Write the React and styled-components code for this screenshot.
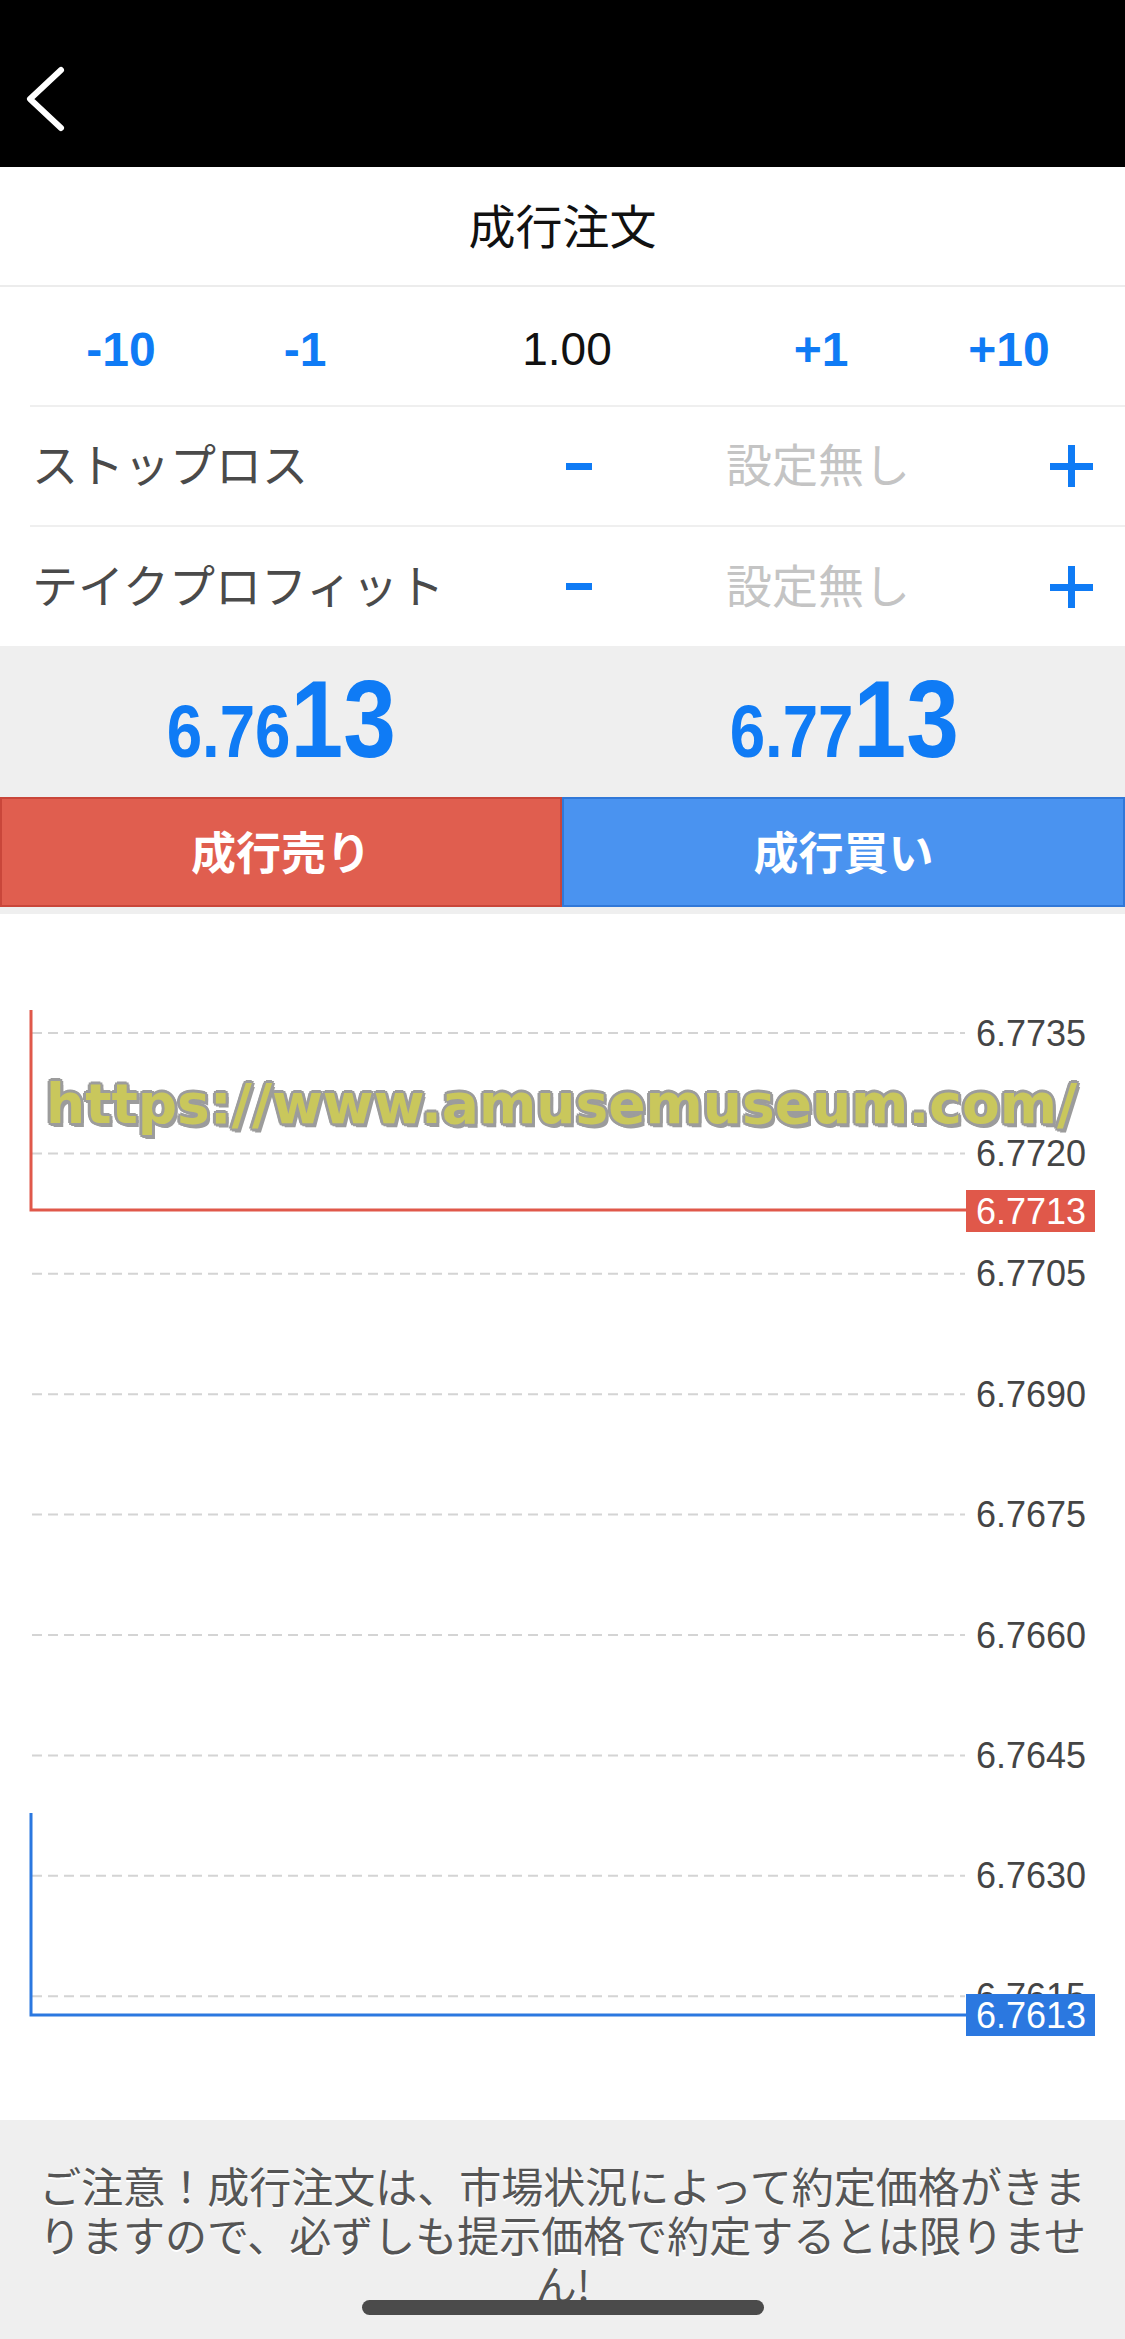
import styled, { createGlobalStyle } from "styled-components";

const GlobalStyle = createGlobalStyle`
  body {
    margin: 0;
    background: #ffffff;
    font-family: "Liberation Sans", "Noto Sans CJK JP", sans-serif;
  }
`;

const BLUE = "#0f7bf5";

const steps = [
  { label: "-10", value: false },
  { label: "-1", value: false },
  { label: "1.00", value: true },
  { label: "+1", value: false },
  { label: "+10", value: false },
];

const gridLabels = [
  "6.7735",
  "6.7720",
  "6.7705",
  "6.7690",
  "6.7675",
  "6.7660",
  "6.7645",
  "6.7630",
  "6.7615",
];

const App = () => {
  return (
    <>
      <GlobalStyle />
      <Page>
        <Header>
          <BackIcon viewBox="0 0 44 68" width="44" height="68">
            <polyline
              points="37,5 6,34 37,63"
              fill="none"
              stroke="#fff"
              strokeWidth="6"
              strokeLinecap="round"
              strokeLinejoin="round"
            />
          </BackIcon>
        </Header>

        <TitleBar>成行注文</TitleBar>

        <Row $cols="182px 186px 338px 170px 206px">
          {steps.map((s) => (
            <StepCell key={s.label} $value={s.value}>
              {s.label}
            </StepCell>
          ))}
        </Row>

        <Row $cols="509px 80px 398px 1fr">
          <Label>ストップロス</Label>
          <Minus />
          <Placeholder>設定無し</Placeholder>
          <Plus />
        </Row>

        <Row $cols="509px 80px 398px 1fr" $last>
          <Label>テイクプロフィット</Label>
          <Minus />
          <Placeholder>設定無し</Placeholder>
          <Plus />
        </Row>

        <PriceBand>
          <PriceCell>
            <Price>
              <PriceSmall>6.76</PriceSmall>
              <PriceBig>13</PriceBig>
            </Price>
          </PriceCell>
          <PriceCell>
            <Price>
              <PriceSmall>6.77</PriceSmall>
              <PriceBig>13</PriceBig>
            </Price>
          </PriceCell>
        </PriceBand>

        <ButtonRow>
          <OrderButton $kind="sell">成行売り</OrderButton>
          <OrderButton $kind="buy">成行買い</OrderButton>
        </ButtonRow>

        <Chart>
          <svg width="1125" height="1206" viewBox="0 0 1125 1206">
            {gridLabels.map((label, i) => {
              const y = 119 + i * 120.4;
              return (
                <g key={label}>
                  <line
                    x1="32"
                    x2="965"
                    y1={y}
                    y2={y}
                    stroke="#d4d4d4"
                    strokeWidth="2"
                    strokeDasharray="10 6"
                  />
                  <text
                    x="976"
                    y={y}
                    dominantBaseline="central"
                    fontFamily="Liberation Sans, sans-serif"
                    fontSize="36"
                    fill="#454545"
                  >
                    {label}
                  </text>
                </g>
              );
            })}

            {/* sell price */}
            <polyline
              points="31,96 31,296 966,296"
              fill="none"
              stroke="#e0584a"
              strokeWidth="3"
            />
            <rect x="966" y="276" width="129" height="42" fill="#e0584a" />
            <text
              x="976"
              y="297"
              dominantBaseline="central"
              fontFamily="Liberation Sans, sans-serif"
              fontSize="36"
              fill="#fff"
            >
              6.7713
            </text>

            {/* buy price */}
            <polyline
              points="31,899 31,1101 966,1101"
              fill="none"
              stroke="#2b78e0"
              strokeWidth="3"
            />
            <rect x="966" y="1080" width="129" height="42" fill="#2b78e0" />
            <text
              x="976"
              y="1101"
              dominantBaseline="central"
              fontFamily="Liberation Sans, sans-serif"
              fontSize="36"
              fill="#fff"
            >
              6.7613
            </text>
          </svg>
          <Watermark>https://www.amusemuseum.com/</Watermark>
        </Chart>

        <Footer>
          <Notice>
            ご注意！成行注文は、市場状況によって約定価格がきまりますので、必ずしも提示価格で約定するとは限りません!
          </Notice>
          <HomeBar />
        </Footer>
      </Page>
    </>
  );
};

const Page = styled.div`
  width: 1125px;
  min-height: 2339px;
  display: flex;
  flex-direction: column;
  background: #fff;
  overflow: hidden;
`;

const Header = styled.div`
  height: 167px;
  background: #000;
  box-sizing: border-box;
  padding: 65px 0 0 24px;
`;

const BackIcon = styled.svg`
  display: block;
`;

const TitleBar = styled.div`
  height: 112px;
  padding-bottom: 6px;
  border-bottom: 2px solid #ececec;
  display: flex;
  align-items: center;
  justify-content: center;
  font-family: "Noto Sans CJK JP", sans-serif;
  font-size: 47px;
  color: #111;
`;

const Row = styled.div`
  margin-left: 30px;
  height: ${(p) => (p.$last ? "119px" : "118px")};
  border-bottom: ${(p) => (p.$last ? "none" : "2px solid #efefef")};
  display: grid;
  grid-template-columns: ${(p) => p.$cols};
  align-items: center;
`;

const StepCell = styled.div`
  text-align: center;
  padding-top: 6px;
  font-size: ${(p) => (p.$value ? "46px" : "48px")};
  font-weight: ${(p) => (p.$value ? 400 : 700)};
  color: ${(p) => (p.$value ? "#111" : BLUE)};
`;

const Label = styled.div`
  padding: 0 0 8px 2px;
  font-family: "Noto Sans CJK JP", sans-serif;
  font-size: 46px;
  color: #4a4a4a;
  white-space: nowrap;
`;

const Placeholder = styled.div`
  text-align: center;
  padding-bottom: 8px;
  font-family: "Noto Sans CJK JP", sans-serif;
  font-size: 46px;
  color: #c4c4c4;
`;

const Minus = styled.div`
  justify-self: center;
  width: 26px;
  height: 7px;
  background: ${BLUE};
`;

const Plus = styled.div`
  justify-self: center;
  position: relative;
  width: 43px;
  height: 42px;

  &::before,
  &::after {
    content: "";
    position: absolute;
    background: ${BLUE};
  }
  &::before {
    left: 0;
    right: 0;
    top: 18px;
    height: 7px;
  }
  &::after {
    top: 0;
    bottom: 0;
    left: 18px;
    width: 7px;
  }
`;

const PriceBand = styled.div`
  height: 151px;
  background: #efefef;
  display: grid;
  grid-template-columns: 1fr 1fr;
`;

const PriceCell = styled.div`
  display: flex;
  justify-content: center;
  align-items: center;
`;

const Price = styled.div`
  font-family: "Liberation Sans", sans-serif;
  font-weight: 700;
  color: ${BLUE};
  line-height: 1;
  white-space: nowrap;
  padding-bottom: 6px;
  transform: scaleX(0.86);
`;

const PriceSmall = styled.span`
  font-size: 74px;
`;

const PriceBig = styled.span`
  font-size: 110px;
`;

const ButtonRow = styled.div`
  display: grid;
  grid-template-columns: 562px 1fr;
  background: #efefef;
  padding-bottom: 7px;
`;

const OrderButton = styled.div`
  height: 110px;
  box-sizing: border-box;
  padding-bottom: 4px;
  display: flex;
  align-items: center;
  justify-content: center;
  font-family: "Noto Sans CJK JP", sans-serif;
  font-weight: 700;
  font-size: 45px;
  color: #fff;
  background: ${(p) => (p.$kind === "sell" ? "#e05e4f" : "#4a93f0")};
  border: 2px solid ${(p) => (p.$kind === "sell" ? "#c9463a" : "#3178d8")};
`;

const Chart = styled.div`
  position: relative;
  height: 1206px;

  svg {
    display: block;
  }
`;

const Watermark = styled.div`
  position: absolute;
  left: 46px;
  top: 163px;
  font-family: "DejaVu Sans", sans-serif;
  font-weight: 700;
  font-size: 55px;
  line-height: 1;
  color: #c9c75c;
  white-space: nowrap;
  text-shadow: 3px 0 0 #9c9c9c, -3px 0 0 #9c9c9c, 0 3px 0 #9c9c9c,
    0 -3px 0 #9c9c9c, 2px 2px 0 #9c9c9c, -2px 2px 0 #9c9c9c,
    2px -2px 0 #9c9c9c, -2px -2px 0 #9c9c9c, 3px 4px 0 #9c9c9c;
`;

const Footer = styled.div`
  position: relative;
  flex: 1;
  height: 219px;
  box-sizing: border-box;
  background: #efefef;
  padding: 40px 30px 0;
`;

const Notice = styled.div`
  font-family: "Noto Sans CJK JP", sans-serif;
  font-size: 42px;
  line-height: 49px;
  color: #555;
  text-align: center;
  text-shadow: 0 2px 0 #fff;
`;

const HomeBar = styled.div`
  position: absolute;
  left: 362px;
  bottom: 24px;
  width: 402px;
  height: 15px;
  border-radius: 8px;
  background: #4b4b4b;
`;

export default App;
